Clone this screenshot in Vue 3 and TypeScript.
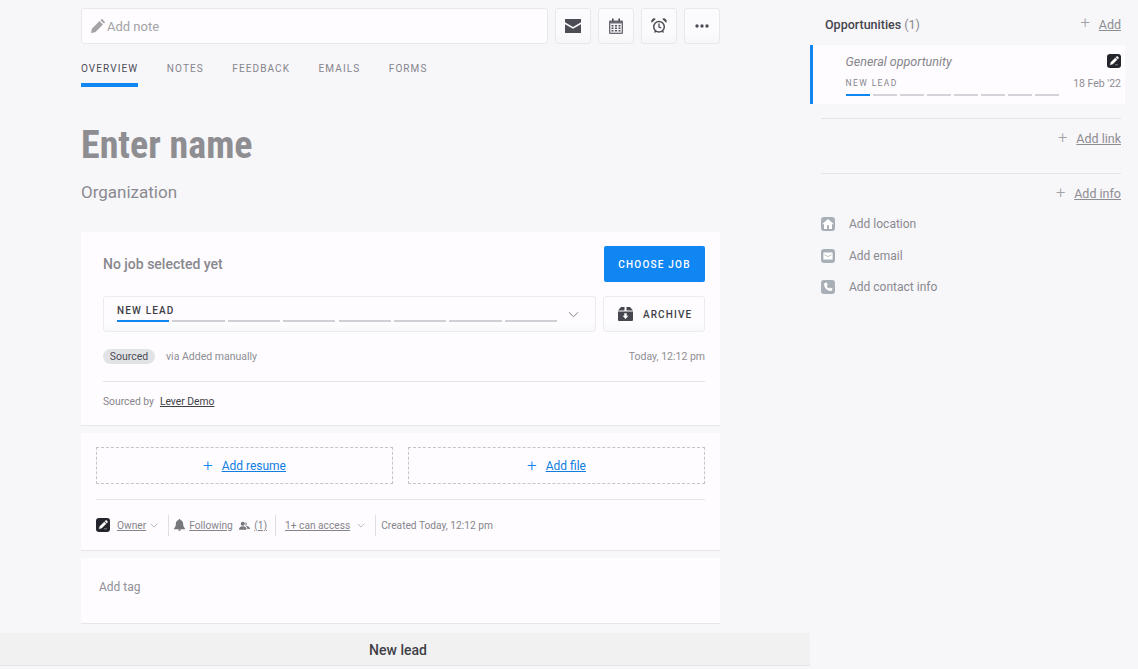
<script setup lang="ts">
const tabs: string[] = ['OVERVIEW', 'NOTES', 'FEEDBACK', 'EMAILS', 'FORMS']
const segs: number[] = [0, 1, 2, 3, 4, 5, 6, 7]
</script>

<template>
  <div class="page">
    <main class="main">
      <div class="topbar">
        <div class="note">
          <svg class="pencil" viewBox="0 0 16 16" width="15" height="15"><path d="M1 15l1-4.600 8.200-8.200 3.600 3.600L5.600 14 1 15zM11.200 1.200l.9-.9c.3-.3.8-.3 1.100 0l2.500 2.500c.3.3.3.8 0 1.100l-.9.900-3.600-3.600z" fill="#a3a3a8"/></svg>
          <span>Add note</span>
        </div>
        <button class="tool">
          <svg viewBox="0 0 16 14" width="16" height="14"><path d="M0 0h16v3.200L8 8 0 3.200zM0 5.200l8 4.600 8-4.600V14H0z" fill="#4d4d55"/></svg>
        </button>
        <button class="tool">
          <svg viewBox="0 0 14 16" width="14" height="16"><path d="M1 2.500h12a1 1 0 0 1 1 1V15a1 1 0 0 1-1 1H1a1 1 0 0 1-1-1V3.500a1 1 0 0 1 1-1z" fill="#6a6a72"/><rect x="3" y="0.500" width="1.600" height="3" fill="#4d4d55"/><rect x="9.400" y="0.500" width="1.600" height="3" fill="#4d4d55"/><rect x="1.300" y="5.500" width="11.400" height="9.200" fill="#f4f4f6"/><path d="M2.500 7h2v1.500h-2zM6 7h2v1.500H6zM9.500 7h2v1.500h-2zM2.500 9.500h2V11h-2zM6 9.500h2V11H6zM9.500 9.500h2V11h-2zM2.500 12h2v1.500h-2zM6 12h2v1.500H6zM9.500 12h2v1.500h-2z" fill="#55555c"/></svg>
        </button>
        <button class="tool">
          <svg viewBox="0 0 16 16" width="16" height="16" fill="none" stroke="#4d4d55"><circle cx="8" cy="8.700" r="5.300" stroke-width="1.500"/><path d="M8 5.500v3.500l2.200.8M3.500 14.500l1.300-1.600M12.500 14.500l-1.300-1.600" stroke-width="1.300"/><path d="M.8 4.800A2.800 2.800 0 0 1 4.800 1zM15.200 4.800A2.800 2.800 0 0 0 11.200 1z" fill="#4d4d55" stroke="none"/></svg>
        </button>
        <button class="tool">
          <svg viewBox="0 0 14 4" width="14" height="4" fill="#4d4d55"><circle cx="2" cy="2" r="1.700"/><circle cx="7" cy="2" r="1.700"/><circle cx="12" cy="2" r="1.700"/></svg>
        </button>
      </div>

      <nav class="tabs">
        <span v-for="(t, i) in tabs" :key="t" class="tab" :class="{ active: i === 0 }">{{ t }}</span>
      </nav>

      <h1 class="name">Enter name</h1>
      <div class="org">Organization</div>

      <section class="card job">
        <div class="job-head">
          <span class="no-job">No job selected yet</span>
          <button class="choose">CHOOSE JOB</button>
        </div>
        <div class="stage-row">
          <div class="stage">
            <div class="stage-main">
              <span class="stage-label">NEW LEAD</span>
              <div class="segs">
                <i v-for="s in segs" :key="s" :class="{ on: s === 0 }"></i>
              </div>
            </div>
            <svg class="chev" viewBox="0 0 12 7" width="11" height="7" fill="none" stroke="#77777e" stroke-width="1"><path d="M1 1l5 5 5-5"/></svg>
          </div>
          <button class="archive">
            <svg viewBox="0 0 15 14" width="15" height="14"><path d="M3 0h3.500v3.500H0zM8.500 0H12l3 3.500H8.500zM0 4.500h15V13a1 1 0 0 1-1 1H1a1 1 0 0 1-1-1z" fill="#47474f"/><path d="M6.300 6.300h2.400v2.500h1.700L7.500 12 4.600 8.800h1.700z" fill="#fff"/></svg>
            <span>ARCHIVE</span>
          </button>
        </div>
        <div class="source-row">
          <span class="pill">Sourced</span>
          <span class="via">via Added manually</span>
          <span class="today">Today, 12:12 pm</span>
        </div>
        <div class="sourced-by">
          <span>Sourced by</span>
          <a>Lever Demo</a>
        </div>
      </section>

      <section class="card files">
        <div class="drops">
          <div class="drop"><span class="plus">+</span><a>Add resume</a></div>
          <div class="drop"><span class="plus">+</span><a>Add file</a></div>
        </div>
        <div class="meta">
          <span class="badge small">
            <svg viewBox="0 0 14 14" width="14" height="14"><path d="M3.200 10.800l.7-2.500 4.400-4.400 1.800 1.800-4.400 4.400zM8.900 3.300l.7-.7a.7.7 0 0 1 1 0l.8.800a.7.7 0 0 1 0 1l-.7.700zM8 10.800h3" fill="#fff" stroke="#fff" stroke-width=".4"/></svg>
          </span>
          <a class="m-owner">Owner</a>
          <svg class="m-chev" viewBox="0 0 10 6" width="8" height="5" fill="none" stroke="#a8a8ae"><path d="M1 1l4 4 4-4"/></svg>
          <span class="sep s1"></span>
          <svg class="bell" viewBox="0 0 12 13" width="11" height="12"><path d="M6 0a1 1 0 0 1 1 1.100C9 1.600 10 3.300 10 5.500c0 2.500.8 3.500 2 4.700v.8H0v-.8c1.200-1.200 2-2.200 2-4.700C2 3.300 3 1.600 5 1.100A1 1 0 0 1 6 0zM4.500 11.500h3A1.500 1.500 0 0 1 4.500 11.500z" fill="#77777e"/></svg>
          <a>Following</a>
          <svg class="people" viewBox="0 0 16 12" width="11" height="9" fill="#77777e"><circle cx="5.500" cy="3.500" r="3"/><path d="M0 12c0-3.500 2.200-5 5.500-5s5.500 1.500 5.500 5z"/><path d="M9.500 .8a3 3 0 0 1 0 5.500C13.500 6.500 16 8 16 11h-4c0-2-.8-3.500-2.500-4.700z"/></svg>
          <a class="count">(1)</a>
          <span class="sep s2"></span>
          <a class="access">1+ can access</a>
          <svg class="m-chev wide" viewBox="0 0 10 6" width="8" height="5" fill="none" stroke="#a8a8ae"><path d="M1 1l4 4 4-4"/></svg>
          <span class="sep s3"></span>
          <span class="created">Created Today, 12:12 pm</span>
        </div>
      </section>

      <section class="card tags">Add tag</section>

      <div class="footer-bar">New lead</div>
    </main>

    <aside class="side">
      <div class="opp-head">
        <span class="opp-title"><b>Opportunities</b> (1)</span>
        <span class="add"><span class="add-plus">+</span><a>Add</a></span>
      </div>
      <div class="opp-card">
        <div class="opp-top">
          <em>General opportunity</em>
          <span class="badge">
            <svg viewBox="0 0 14 14" width="14" height="14"><path d="M3.200 10.800l.7-2.500 4.400-4.400 1.800 1.800-4.400 4.400zM8.900 3.300l.7-.7a.7.7 0 0 1 1 0l.8.800a.7.7 0 0 1 0 1l-.7.700zM8 10.800h3" fill="#fff" stroke="#fff" stroke-width=".4"/></svg>
          </span>
        </div>
        <div class="opp-mid">
          <span class="opp-stage">NEW LEAD</span>
          <span class="opp-date">18 Feb '22</span>
        </div>
        <div class="opp-segs">
          <i v-for="s in segs" :key="s" :class="{ on: s === 0 }"></i>
        </div>
      </div>

      <div class="block link-block">
        <span class="add"><span class="add-plus">+</span><a>Add link</a></span>
      </div>
      <div class="block info-block">
        <span class="add"><span class="add-plus">+</span><a>Add info</a></span>
      </div>

      <ul class="infos">
        <li>
          <span class="ic"><svg viewBox="0 0 14 14" width="14" height="14"><path d="M7 2l5.500 4.700-.7.800-.8-.6v5h-3V8.300H6v3.600H3V6.900l-.8.600-.7-.8z" fill="#fff"/></svg></span>
          Add location
        </li>
        <li>
          <span class="ic"><svg viewBox="0 0 14 14" width="14" height="14"><path d="M3 3.500h8a.6.600 0 0 1 .6.600v5.800a.6.600 0 0 1-.6.600H3a.6.600 0 0 1-.6-.6V4.100A.6.600 0 0 1 3 3.500zM3.500 5.300v.8L7 8l3.500-1.900v-.8L7 7.200z" fill="#fff" fill-rule="evenodd"/></svg></span>
          Add email
        </li>
        <li>
          <span class="ic"><svg viewBox="0 0 14 14" width="14" height="14"><path d="M4.300 2.800l1.400-.3 1 2.600-1 .9c.5 1.200 1.200 1.900 2.300 2.400l.9-1 2.600 1-.3 1.400c-.2.800-.9 1.300-1.700 1.200C6 10.600 3.400 8 3.100 4.500 3 3.700 3.500 3 4.300 2.800z" fill="#fff"/></svg></span>
          Add contact info
        </li>
      </ul>
    </aside>
  </div>
</template>

<style>
html, body { margin: 0; background: #f7f6f9; }
</style>

<style scoped>
.page {
  display: flex;
  width: 1138px;
  height: 669px;
  overflow: hidden;
  position: relative;
  background: #f7f6f9;
  font-family: Roboto, "Noto Sans", sans-serif;
  color: #8a8a90;
}
.main {
  width: 639px;
  padding: 8px 90px 0 81px;
  flex: none;
}
.topbar { display: flex; gap: 7px; }
.note {
  flex: 1;
  height: 36px;
  box-sizing: border-box;
  display: flex;
  align-items: center;
  gap: 2px;
  padding-left: 8px;
  background: #fefcfe;
  border: 1px solid #e8e8ec;
  border-radius: 3px;
  font-size: 13px;
  color: #a3a3a8;
}
.tool {
  width: 36px;
  height: 36px;
  padding: 0;
  display: flex;
  align-items: center;
  justify-content: center;
  background: linear-gradient(#fbfafc 70%, #f6f6f8);
  border: 1px solid #e8e8ec;
  border-radius: 3px;
}
.tabs {
  display: flex;
  gap: 28.500px;
  height: 43px;
  box-sizing: border-box;
  padding-top: 17px;
}
.tab {
  font-size: 10px;
  letter-spacing: 1.100px;
  color: #85858c;
  line-height: 15px;
  height: 26px;
  box-sizing: border-box;
}
.tab.active { color: #4d4d55; border-bottom: 4px solid #0f86f2; }
.name {
  margin: 36px 0 0;
  font-family: "Roboto Condensed", "Liberation Sans Narrow", "Liberation Sans", sans-serif;
  font-size: 38px;
  line-height: 44px;
  font-weight: 700;
  color: #8e8e92;
}
.org {
  margin-top: 13px;
  font-size: 17px;
  line-height: 24px;
  color: #8a8a90;
}
.card {
  background: #fefcfe;
  border-bottom: 1px solid #e6e6ea;
  box-sizing: border-box;
}
.job {
  height: 194px;
  margin-top: 28px;
  padding: 14px 15px 0 22px;
}
.job-head {
  display: flex;
  justify-content: space-between;
  align-items: center;
  height: 36px;
}
.no-job { font-size: 14px; font-weight: 500; color: #88888e; }
.choose {
  width: 101px;
  height: 36px;
  background: #0f86f2;
  border: 0;
  border-radius: 2px;
  color: #fff;
  font-family: inherit;
  font-size: 10px;
  font-weight: 500;
  letter-spacing: 1.200px;
  padding: 0;
}
.stage-row {
  display: flex;
  gap: 7px;
  margin-top: 14px;
}
.stage {
  flex: 1;
  height: 36px;
  box-sizing: border-box;
  border: 1px solid #ececf0;
  border-radius: 3px;
  background: linear-gradient(#fefcfe 70%, #f8f8fa);
  display: flex;
  align-items: center;
  padding: 0 16px 0 13px;
}
.stage-main { flex: 1; }
.stage-label {
  display: block;
  font-size: 10px;
  line-height: 12px;
  letter-spacing: 1.150px;
  font-weight: 500;
  color: #3f3f47;
  margin-top: -1px;
}
.segs {
  display: flex;
  gap: 3.300px;
  margin-top: 3px;
  width: 440px;
}
.segs i { flex: 1; height: 2px; background: #cfcfd6; }
.segs i.on { background: #0f86f2; }
.chev { margin-left: 5px; }
.archive {
  width: 102px;
  height: 36px;
  box-sizing: border-box;
  border: 1px solid #ececf0;
  border-radius: 3px;
  background: linear-gradient(#fefcfe 70%, #f8f8fa);
  display: flex;
  align-items: center;
  gap: 10px;
  padding: 0 0 0 14px;
  font-family: inherit;
  font-size: 10px;
  font-weight: 500;
  letter-spacing: 1.100px;
  color: #3f3f47;
}
.source-row {
  display: flex;
  align-items: center;
  margin-top: 16px;
  height: 16px;
  font-size: 10.500px;
  color: #8d8d93;
}
.pill {
  width: 52px;
  height: 15px;
  line-height: 15px;
  text-align: center;
  background: #e2e3e7;
  border-radius: 8px;
  color: #4d4d55;
  margin-right: 11px;
}
.today { margin-left: auto; }
.sourced-by {
  margin-top: 17px;
  padding-top: 12px;
  border-top: 1px solid #e3e3e8;
  font-size: 10.300px;
  line-height: 15px;
  color: #85858b;
  display: flex;
  gap: 6px;
}
.sourced-by a { color: #3f3f47; text-decoration: underline; }
.files {
  height: 118px;
  margin-top: 7px;
  padding: 14px 15px 0;
}
.drops { display: flex; gap: 15px; }
.drop {
  flex: 1;
  height: 37px;
  box-sizing: border-box;
  border: 1px dashed #c4c4ca;
  display: flex;
  align-items: center;
  justify-content: center;
  gap: 9px;
  font-size: 12px;
}
.drop a { color: #0f7ee0; text-decoration: underline; }
.plus { color: #0f86f2; font-size: 17px; line-height: 16px; font-weight: 300; margin-top: -2px; }
.meta {
  margin-top: 15px;
  padding-top: 15px;
  border-top: 1px solid #e6e6ea;
  display: flex;
  align-items: center;
  height: 20px;
  font-size: 10.200px;
  color: #85858b;
}
.meta a { text-decoration: underline; color: #85858b; }
.badge {
  width: 14px;
  height: 14px;
  border-radius: 3px;
  background: #24242c;
  display: inline-flex;
  flex: none;
}
.m-owner { margin-left: 7px; }
.m-chev { margin-left: 4px; }
.m-chev.wide { margin-left: 7px; }
.sep { width: 1px; height: 21px; background: #dfdfe3; margin: 0 5px 0 10px; }
.s2 { margin-left: 8px; margin-right: 9px; }
.bell { margin-right: 4px; }
.people { margin: 0 4px 0 6.500px; }
.tags {
  height: 66px;
  margin-top: 7px;
  padding: 20px 18px 0;
  font-size: 12px;
  line-height: 18px;
  color: #919197;
}
.footer-bar {
  position: absolute;
  left: 0;
  top: 633px;
  width: 810px;
  height: 33px;
  line-height: 34px;
  text-align: center;
  box-sizing: border-box;
  background: #f1f1f2;
  border-bottom: 1px solid #e4e4e6;
  font-size: 14px;
  font-weight: 500;
  color: #3f3f47;
  padding-right: 14px;
}
.side {
  position: absolute;
  left: 810px;
  top: 0;
  width: 328px;
}
.opp-head {
  display: flex;
  justify-content: space-between;
  align-items: center;
  height: 20px;
  margin: 14px 17px 0 15px;
}
.opp-title { font-size: 12.500px; color: #8a8a90; }
.opp-title b { font-weight: 500; color: #45454d; }
.add { display: inline-flex; align-items: center; gap: 9px; font-size: 12.500px; color: #8d8d93; }
.add a { text-decoration: underline; }
.add-plus { font-size: 16.500px; line-height: 16px; color: #a2a2a8; font-weight: 300; margin-top: -2px; }
.opp-card {
  margin-top: 11px;
  width: 315px;
  height: 59px;
  box-sizing: border-box;
  background: #fefcfe;
  border-left: 3.500px solid #0f86f2;
  padding: 8px 4px 0 32.500px;
}
.opp-top { display: flex; justify-content: space-between; align-items: center; height: 16px; }
.opp-top em { font-size: 12.500px; color: #85858b; }
.opp-mid {
  display: flex;
  justify-content: space-between;
  align-items: center;
  height: 16px;
  margin-top: 6px;
}
.opp-stage { font-size: 8.500px; letter-spacing: 1.400px; color: #85858b; }
.opp-date { font-size: 10.500px; color: #8d8d93; }
.opp-segs { display: flex; gap: 3px; width: 213px; margin-top: 3px; }
.opp-segs i { flex: 1; height: 1.500px; background: #d3d3d9; }
.opp-segs i.on { background: #0f86f2; }
.block {
  margin: 0 17px 0 11px;
  border-top: 1px solid #e3e3e8;
  display: flex;
  justify-content: flex-end;
  align-items: flex-start;
}
.link-block { margin-top: 14px; height: 55px; padding-top: 12px; box-sizing: border-box; }
.info-block { height: 31px; padding-top: 12px; box-sizing: content-box; }
.infos { list-style: none; margin: 0 0 0 11px; padding: 0; font-size: 12px; color: #8a8a90; }
.infos li { display: flex; align-items: center; gap: 14px; height: 14px; margin-bottom: 17.500px; }
.ic {
  width: 14px;
  height: 14px;
  border-radius: 3px;
  background: #a9afb6;
  display: inline-flex;
}
</style>
